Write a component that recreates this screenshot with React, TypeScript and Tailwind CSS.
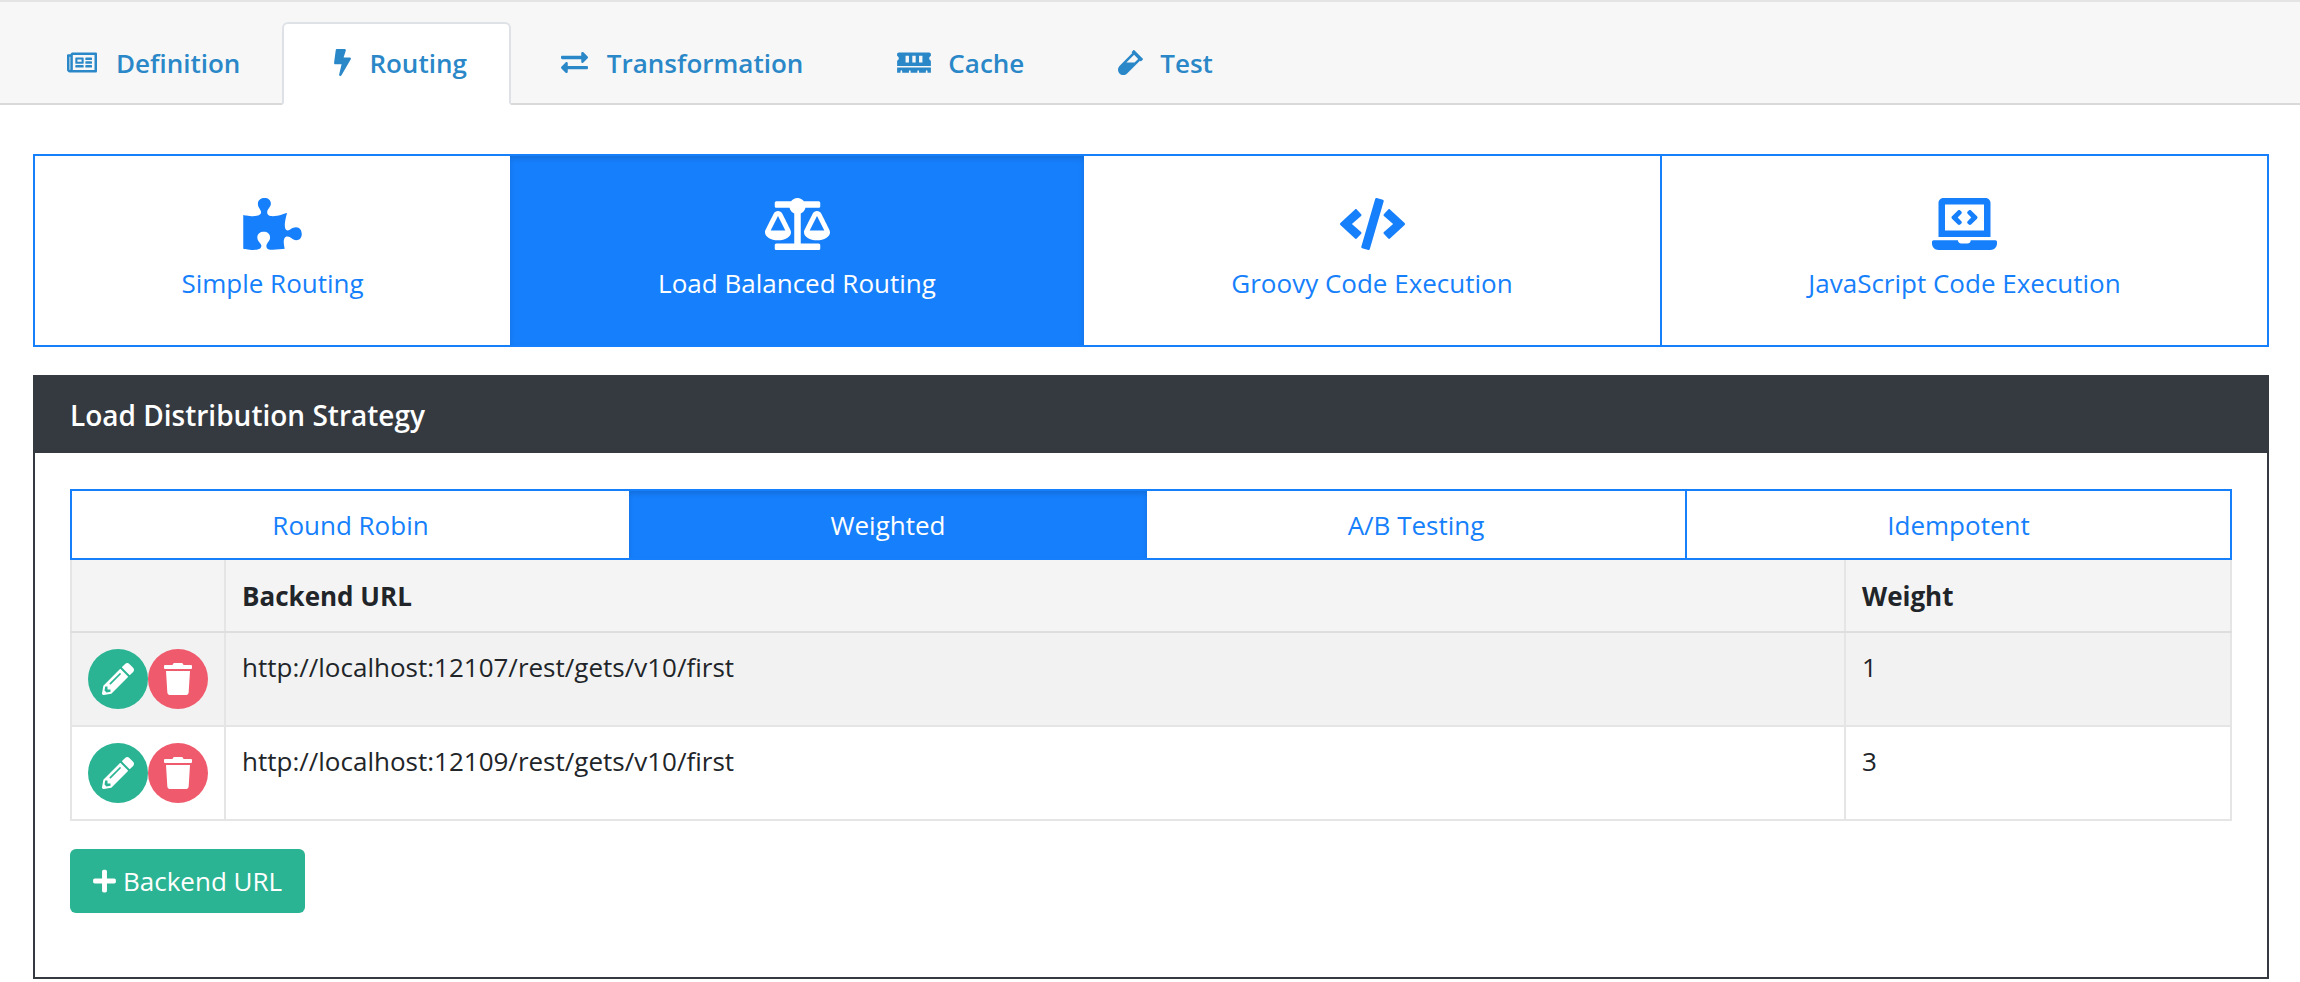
import type { ReactNode } from "react"
import {
  FaBalanceScale,
  FaBolt,
  FaCode,
  FaExchangeAlt,
  FaLaptopCode,
  FaMemory,
  FaPencilAlt,
  FaPlus,
  FaPuzzlePiece,
  FaRegNewspaper,
  FaTrash,
  FaVial,
} from "react-icons/fa"

const tabs = [
  { label: "Definition", spacing: "gap-[19px] pl-[48px] pr-[40px]", icon: <FaRegNewspaper className="h-[27px] w-[30px]" /> },
  { label: "Routing", spacing: "gap-[18px] pl-[50px] pr-[42px]", icon: <FaBolt className="h-[27px] w-[17px]" />, active: true },
  { label: "Transformation", spacing: "gap-[19px] pl-[48px] pr-[42px]", icon: <FaExchangeAlt className="h-[27px] w-[27px]" /> },
  { label: "Cache", spacing: "gap-[17px] pl-[48px] pr-[42px]", icon: <FaMemory className="h-[27px] w-[34px]" /> },
  { label: "Test", spacing: "gap-[17px] pl-[48px] pr-[42px]", icon: <FaVial className="h-[27px] w-[25px]" /> },
]

const routingTypes = [
  { label: "Simple Routing", width: "w-[475px]", icon: <FaPuzzlePiece className="h-[52px] w-[59px]" /> },
  { label: "Load Balanced Routing", width: "w-[574px]", icon: <FaBalanceScale className="h-[52px] w-[65px]" />, active: true },
  { label: "Groovy Code Execution", width: "w-[576px]", icon: <FaCode className="h-[52px] w-[65px]" /> },
  { label: "JavaScript Code Execution", width: "flex-1", icon: <FaLaptopCode className="h-[52px] w-[65px]" />, divider: true },
]

const strategies = [
  { label: "Round Robin", width: "w-[557px]" },
  { label: "Weighted", width: "w-[518px]", active: true },
  { label: "A/B Testing", width: "w-[538px]" },
  { label: "Idempotent", width: "flex-1", divider: true },
]

const backends = [
  { url: "http://localhost:12107/rest/gets/v10/first", weight: 1 },
  { url: "http://localhost:12109/rest/gets/v10/first", weight: 3 },
]

function RoundButton({ color, children }: { color: string; children: ReactNode }) {
  return (
    <button className={`flex h-[60px] w-[60px] items-center justify-center rounded-full text-white ${color}`}>
      {children}
    </button>
  )
}

export default function App() {
  return (
    <div className="h-[982px] overflow-hidden bg-white font-['Open_Sans',sans-serif] text-[26px] leading-[36px] text-[#212529]">
      <nav className="flex h-[105px] items-end border-t-2 border-b-2 border-t-[#e4e4e4] border-b-[#d9d9d9] bg-[#f7f7f7] pl-[17px] font-semibold text-[#2a87c8]">
        {tabs.map((tab) => (
          <a
            key={tab.label}
            className={`-mb-[2px] flex h-[83px] items-center rounded-t-[6px] border-2 pb-[2px] ${tab.spacing} ${
              tab.active ? "border-[#dee2e6] border-b-white bg-white" : "border-transparent"
            }`}
          >
            {tab.icon}
            <span>{tab.label}</span>
          </a>
        ))}
      </nav>

      <div className="mt-[49px] mr-[31px] ml-[33px] flex h-[193px] border-2 border-[#167ffc]">
        {routingTypes.map((type) => (
          <button
            key={type.label}
            className={`flex flex-col items-center pt-[42px] ${type.width} ${type.divider ? "border-l-2 border-[#167ffc]" : ""} ${
              type.active ? "bg-[#167ffc] text-white shadow-[inset_0_3px_5px_rgba(0,0,0,0.125)]" : "text-[#167ffc]"
            }`}
          >
            {type.icon}
            <span className="mt-[15px]">{type.label}</span>
          </button>
        ))}
      </div>

      <section className="mt-[28px] mr-[31px] ml-[33px] h-[604px] border-2 border-[#343a40]">
        <h2 className="flex h-[76px] items-center bg-[#343a40] pl-[35px] text-[28px] font-semibold text-white">
          Load Distribution Strategy
        </h2>
        <div className="pt-[36px] pr-[35px] pl-[35px]">
          <div className="flex h-[71px] border-2 border-[#167ffc]">
            {strategies.map((s) => (
              <button
                key={s.label}
                className={`flex items-center justify-center ${s.width} ${s.divider ? "border-l-2 border-[#167ffc]" : ""} ${
                  s.active ? "bg-[#167ffc] text-white shadow-[inset_0_3px_5px_rgba(0,0,0,0.125)]" : "text-[#167ffc]"
                }`}
              >
                {s.label}
              </button>
            ))}
          </div>

          <table className="w-full table-fixed border-collapse">
            <colgroup>
              <col className="w-[154px]" />
              <col className="w-[1620px]" />
              <col />
            </colgroup>
            <thead>
              <tr className="h-[72px] bg-[#f4f4f4] text-left font-bold">
                <th className="border-2 border-t-0 border-[#e5e5e5] border-b-[#dedede]"></th>
                <th className="border-2 border-t-0 border-[#e5e5e5] border-b-[#dedede] pl-[16px]">Backend URL</th>
                <th className="border-2 border-t-0 border-[#e5e5e5] border-b-[#dedede] pl-[16px]">Weight</th>
              </tr>
            </thead>
            <tbody>
              {backends.map((row, i) => (
                <tr key={row.url} className={`h-[94px] ${i === 0 ? "bg-[#f2f2f2]" : "bg-white"}`}>
                  <td className="border-2 border-[#e5e5e5] pl-[16px]">
                    <div className="flex">
                      <RoundButton color="bg-[#2ab493]">
                        <FaPencilAlt className="h-[32px] w-[32px]" />
                      </RoundButton>
                      <RoundButton color="bg-[#ef5a6d]">
                        <FaTrash className="h-[32px] w-[28px]" />
                      </RoundButton>
                    </div>
                  </td>
                  <td className="border-2 border-[#e5e5e5] pt-[16px] pl-[16px] align-top">{row.url}</td>
                  <td className="border-2 border-[#e5e5e5] pt-[16px] pl-[16px] align-top">{row.weight}</td>
                </tr>
              ))}
            </tbody>
          </table>

          <button className="mt-[28px] flex h-[64px] items-center gap-[7px] rounded-[6px] bg-[#2ab493] px-[23px] text-white">
            <FaPlus className="h-[26px] w-[23px]" />
            Backend URL
          </button>
        </div>
      </section>
    </div>
  )
}
